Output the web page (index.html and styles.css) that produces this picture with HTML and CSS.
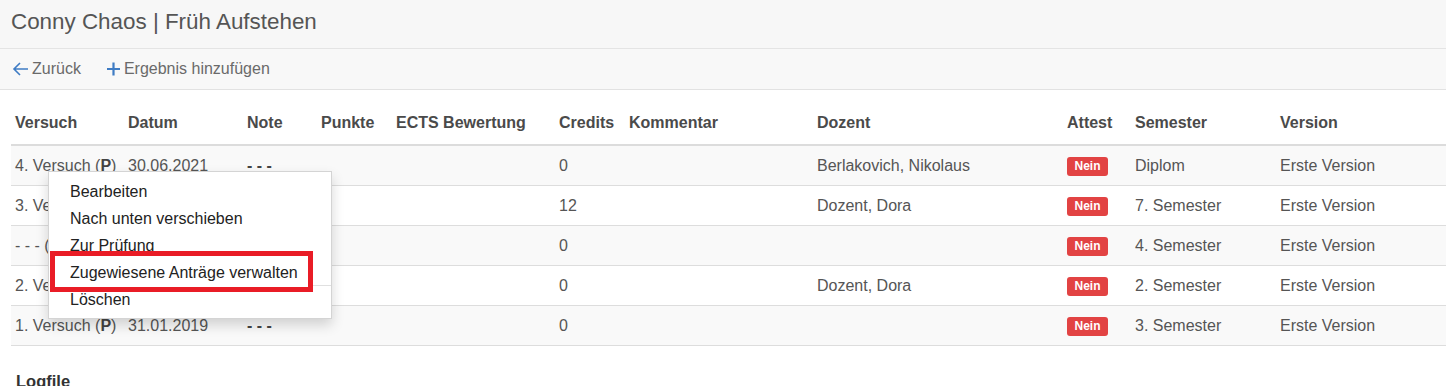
FILE: index.html
```html
<!DOCTYPE html>
<html>
<head>
	<meta charset="utf-8">
	<meta name="viewport" content="width=device-width, initial-scale=1">
	<title>Prüfungsergebnisse</title>
	<link rel="stylesheet" href="styles.css">
</head>
<body>
	<div class="page-header">
		<h1>Conny Chaos | Früh Aufstehen</h1>
	</div>
	<div class="toolbar">
		<a class="tool-link" href="#">
			<svg class="icon" width="17" height="16" viewBox="0 0 17 16"><path d="M16 8H2M8 2L2 8l6 6" fill="none" stroke="#3f7cc4" stroke-width="1.6"/></svg>
			Zurück
		</a>
		<a class="tool-link" href="#">
			<svg class="icon" width="15" height="16" viewBox="0 0 15 16"><path d="M7.5 1.5v13M1 8h13" fill="none" stroke="#3f7cc4" stroke-width="2.2"/></svg>
			Ergebnis hinzufügen
		</a>
	</div>

	<table class="results">
		<colgroup>
			<col style="width:113px"><col style="width:119px"><col style="width:74px"><col style="width:75px">
			<col style="width:163px"><col style="width:70px"><col style="width:188px"><col style="width:250px">
			<col style="width:68px"><col style="width:145px"><col style="width:170px">
		</colgroup>
		<thead>
			<tr>
				<th>Versuch</th><th>Datum</th><th>Note</th><th>Punkte</th><th>ECTS Bewertung</th><th>Credits</th>
				<th>Kommentar</th><th>Dozent</th><th>Attest</th><th>Semester</th><th>Version</th>
			</tr>
		</thead>
		<tbody>
			<tr>
				<td>4. Versuch (<b>P</b>)</td><td>30.06.2021</td><td class="none">- - -</td><td></td><td></td><td>0</td>
				<td></td><td>Berlakovich, Nikolaus</td><td><span class="label">Nein</span></td><td>Diplom</td><td>Erste Version</td>
			</tr>
			<tr>
				<td>3. Versuch (<b>P</b>)</td><td>15.02.2021</td><td>5</td><td></td><td></td><td>12</td>
				<td></td><td>Dozent, Dora</td><td><span class="label">Nein</span></td><td>7. Semester</td><td>Erste Version</td>
			</tr>
			<tr>
				<td>- - - (<b>P</b>)</td><td>01.10.2020</td><td class="none">- - -</td><td></td><td></td><td>0</td>
				<td></td><td></td><td><span class="label">Nein</span></td><td>4. Semester</td><td>Erste Version</td>
			</tr>
			<tr>
				<td>2. Versuch (<b>P</b>)</td><td>30.06.2019</td><td class="none">- - -</td><td></td><td></td><td>0</td>
				<td></td><td>Dozent, Dora</td><td><span class="label">Nein</span></td><td>2. Semester</td><td>Erste Version</td>
			</tr>
			<tr>
				<td>1. Versuch (<b>P</b>)</td><td>31.01.2019</td><td class="none">- - -</td><td></td><td></td><td>0</td>
				<td></td><td></td><td><span class="label">Nein</span></td><td>3. Semester</td><td>Erste Version</td>
			</tr>
		</tbody>
	</table>

	<h4 class="section-title">Logfile</h4>

	<!-- context menu of the first row -->
	<ul class="context-menu">
		<li><a href="#">Bearbeiten</a></li>
		<li><a href="#">Nach unten verschieben</a></li>
		<li><a href="#">Zur Prüfung</a></li>
		<li class="split"><a href="#">Zugewiesene Anträge verwalten</a></li>
		<li><a href="#">Löschen</a></li>
		<div class="mark"></div>
	</ul>
</body>
</html>
```

FILE: styles.css
```css
/* General Reset */
* {
	box-sizing: border-box;
	margin: 0;
	padding: 0;
}

body {
	background: white;
	font-family: "Liberation Sans", Arial, sans-serif;
	font-size: 16px;
	color: #555;
	overflow: hidden;
	width: 1446px;
	height: 386px;
}

a {
	text-decoration: none;
}

/* Header */
.page-header {
	height: 49px;
	padding-left: 11px;
	display: flex;
	align-items: center;
	background: #f7f7f7;
	border-bottom: 1px solid #e4e4e4;
}

.page-header h1 {
	font-size: 22.4px;
	font-weight: normal;
	color: #555;
	margin-top: -4px;
}

/* Toolbar */
.toolbar {
	height: 41px;
	padding-left: 12px;
	display: flex;
	align-items: center;
	gap: 25px;
	background: #f8f8f8;
	border-bottom: 1px solid #e2e2e2;
}

.tool-link {
	display: flex;
	align-items: center;
	gap: 3px;
	font-size: 16px;
	color: #6a6a6a;
}

.icon {
	display: block;
}

/* Table */
.results {
	margin-left: 11px;
	width: 1435px;
	border-collapse: collapse;
	table-layout: fixed;
}

.results th {
	text-align: left;
	font-weight: bold;
	color: #4a4a4a;
	line-height: 20px;
	padding: 23px 0 11px 4px;
	border-bottom: 2px solid #dcdcdc;
	white-space: nowrap;
}

.results td {
	height: 40px;
	line-height: 20px;
	padding: 10px 0 9px 4px;
	border-bottom: 1px solid #dddddd;
	white-space: nowrap;
	overflow: hidden;
}

.results tbody tr:nth-child(odd) td {
	background: #f9f9f9;
}

.results b {
	color: #444;
}

.results .none {
	font-weight: bold;
	color: #444;
}

.label {
	display: inline-block;
	width: 41px;
	height: 19px;
	line-height: 19px;
	margin-top: 1px;
	text-align: center;
	background: #e24343;
	color: white;
	font-size: 12px;
	font-weight: bold;
	border-radius: 3px;
	vertical-align: top;
}

.section-title {
	margin: 26px 0 0 16px;
	font-size: 16.5px;
	color: #333;
}

/* Context Menu */
.context-menu {
	position: absolute;
	left: 48px;
	top: 171px;
	width: 284px;
	height: 148px;
	list-style: none;
	padding: 6px 0 5px;
	background: white;
	border: 1px solid rgba(0, 0, 0, 0.17);
	box-shadow: 0 6px 12px rgba(0, 0, 0, 0.16);
}

.context-menu li {
	position: relative;
}

.context-menu a {
	display: block;
	padding-left: 21px;
	line-height: 27px;
	color: #222;
	white-space: nowrap;
}

.context-menu .split::after {
	content: "";
	position: absolute;
	right: 0;
	bottom: 0;
	width: 22px;
	height: 1px;
	background: #e0e0e0;
}

.mark {
	position: absolute;
	left: 1px;
	top: 79px;
	width: 263px;
	height: 41px;
	border: 5px solid #e91c26;
	pointer-events: none;
}
```
